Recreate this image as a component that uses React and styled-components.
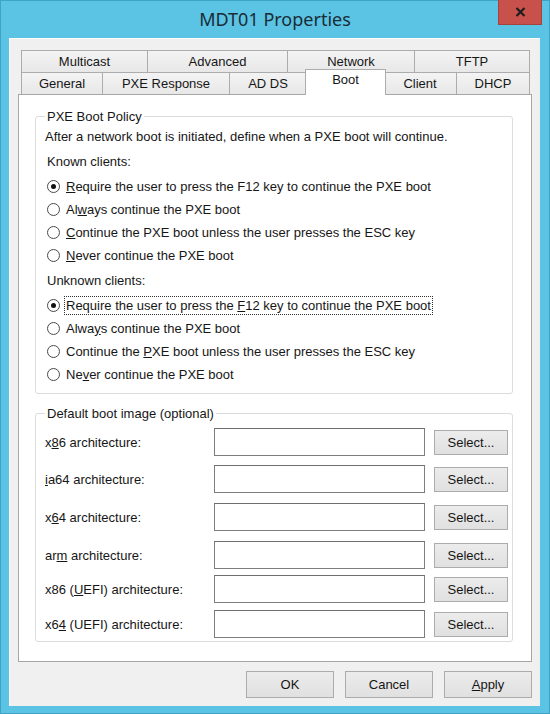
import React from 'react';
import styled, { createGlobalStyle } from 'styled-components';

const GlobalStyle = createGlobalStyle`
  html, body { margin: 0; padding: 0; background: #5bc4e4; }
  body { font-family: "Liberation Sans", Arial, sans-serif; }
  * { box-sizing: border-box; }
`;

const Window = styled.div`
  width: 550px;
  height: 714px;
  background: #5bc4e4;
  border: 1px solid #3fa3c6;
  display: flex;
  flex-direction: column;
`;

const TitleBar = styled.div`
  height: 37px;
  flex: none;
  display: grid;
  grid-template-columns: 1fr auto 1fr;
  align-items: start;
`;

const Title = styled.div`
  grid-column: 2;
  font-family: "Noto Sans", "Open Sans", sans-serif;
  font-size: 18px;
  line-height: 37px;
  color: #1a2c36;
`;

const CloseButton = styled.div`
  grid-column: 3;
  justify-self: end;
  width: 44px;
  height: 25px;
  margin-right: 7px;
  margin-top: -1px;
  background: #c9514c;
  border: 1px solid #a8423d;
  border-top: none;
  display: flex;
  align-items: center;
  justify-content: center;
`;

const Client = styled.div`
  flex: 1;
  margin: 0 9px 7px 8px;
  background: #f0f0f0;
  border-left: 1px solid #fbfbfb;
  border-top: 1px solid #fbfbfb;
  padding: 11px 8px 8px 8px;
  display: flex;
  flex-direction: column;
  color: #161616;
  font-size: 13px;
`;

const TabStrip = styled.div`
  flex: none;
  padding: 0 2px 0 3px;
  position: relative;
  z-index: 2;
`;

const TabRow = styled.div`
  display: flex;
  align-items: flex-start;
  height: 22px;
`;

const Tab = styled.div`
  flex: none;
  width: ${(p) => p.$w}px;
  height: 22px;
  border-top: 1px solid #acacac;
  border-right: 1px solid #acacac;
  background: linear-gradient(#f3f3f3, #e8e8e8);
  display: flex;
  align-items: center;
  justify-content: center;
  line-height: 16px;
  &:first-child {
    border-left: 1px solid #acacac;
  }
`;

const ActiveTab = styled(Tab)`
  width: ${(p) => p.$w + 4}px;
  height: 26px;
  margin: -3px -2px 0 -2px;
  border: 1px solid #acacac;
  border-bottom: none;
  background: #ffffff;
  padding-bottom: 5px;
  position: relative;
  z-index: 3;
`;

const Panel = styled.div`
  flex: 1;
  background: #ffffff;
  border: 1px solid #a6a6a6;
  padding: 13px 18px 0 16px;
  display: flex;
  flex-direction: column;
`;

const Group = styled.fieldset`
  margin: ${(p) => p.$top || 0}px 0 0 0;
  border: 1px solid #dcdcdc;
  border-radius: 3px;
  padding: ${(p) => p.$pad || '0 9px 7px 9px'};
  min-width: 0;
`;

const Legend = styled.legend`
  padding: 0 2px;
  margin-left: 0;
  line-height: 17px;
`;

const Line = styled.div`
  height: 23px;
  line-height: 23px;
  padding-left: ${(p) => p.$indent || 0}px;
  margin-top: ${(p) => p.$top || 0}px;
  white-space: nowrap;
`;

const RadioList = styled.div`
  margin-top: 2px;
  display: flex;
  flex-direction: column;
`;

const RadioRow = styled.div`
  display: flex;
  align-items: center;
  height: 23px;
  padding-left: 2px;
  gap: 4px;
  white-space: nowrap;
`;

const RadioCircle = styled.span`
  flex: none;
  width: 13px;
  height: 13px;
  border-radius: 50%;
  border: 1px solid #4a4a4a;
  background: #fff;
  display: flex;
  align-items: center;
  justify-content: center;
  &::after {
    content: '';
    width: 5px;
    height: 5px;
    border-radius: 50%;
    background: ${(p) => (p.$checked ? '#111' : 'transparent')};
  }
`;

const RadioText = styled.span`
  line-height: 17px;
  padding: 0 1px;
  border: 1px ${(p) => (p.$focused ? 'dotted #303030' : 'solid transparent')};
`;

const ImageRow = styled.div`
  display: grid;
  grid-template-columns: 160px 211px 74px;
  column-gap: 9px;
  align-items: center;
  margin-top: ${(p) => p.$top}px;
`;

const RowLabel = styled.div`
  white-space: nowrap;
`;

const TextBox = styled.div`
  height: 28px;
  background: #fff;
  border: 1px solid #7d7d7d;
  border-top-color: #6f6f6f;
`;

const PushButton = styled.div`
  width: ${(p) => p.$w || 74}px;
  height: ${(p) => p.$h || 25}px;
  background: linear-gradient(#ececec, #e0e0e0);
  border: 1px solid #acacac;
  display: flex;
  align-items: center;
  justify-content: center;
  white-space: nowrap;
`;

const ButtonBar = styled.div`
  flex: none;
  margin-top: 9px;
  display: flex;
  justify-content: flex-end;
  gap: 11px;
`;

const backTabs = [
  { label: 'Multicast', w: 127 },
  { label: 'Advanced', w: 140 },
  { label: 'Network', w: 127 },
  { label: 'TFTP', w: 115 },
];

const frontTabs = [
  { label: 'General', w: 82 },
  { label: 'PXE Response', w: 127 },
  { label: 'AD DS', w: 77 },
  { label: 'Boot', w: 77, active: true },
  { label: 'Client', w: 73 },
  { label: 'DHCP', w: 73 },
];

const knownOptions = [
  [<u key="u">R</u>, 'equire the user to press the F12 key to continue the PXE boot'],
  ['Al', <u key="u">w</u>, 'ays continue the PXE boot'],
  [<u key="u">C</u>, 'ontinue the PXE boot unless the user presses the ESC key'],
  [<u key="u">N</u>, 'ever continue the PXE boot'],
];

const unknownOptions = [
  ['Require the user to press the ', <u key="u">F</u>, '12 key to continue the PXE boot'],
  ['Alwa', <u key="u">y</u>, 's continue the PXE boot'],
  ['Continue the ', <u key="u">P</u>, 'XE boot unless the user presses the ESC key'],
  ['Ne', <u key="u">v</u>, 'er continue the PXE boot'],
];

const architectures = [
  { label: ['x', <u key="u">8</u>, '6 architecture:'], top: 6 },
  { label: [<u key="u">i</u>, 'a64 architecture:'], top: 9 },
  { label: ['x', <u key="u">6</u>, '4 architecture:'], top: 10 },
  { label: ['ar', <u key="u">m</u>, ' architecture:'], top: 10 },
  { label: ['x86 (', <u key="u">U</u>, 'EFI) architecture:'], top: 6 },
  { label: ['x6', <u key="u">4</u>, ' (UEFI) architecture:'], top: 7 },
];

function RadioGroup({ options, focusFirst }) {
  return (
    <RadioList>
      {options.map((text, i) => (
        <RadioRow key={i}>
          <RadioCircle $checked={i === 0} />
          <RadioText $focused={focusFirst && i === 0}>{text}</RadioText>
        </RadioRow>
      ))}
    </RadioList>
  );
}

export default function App() {
  return (
    <>
      <GlobalStyle />
      <Window>
        <TitleBar>
          <Title>MDT01 Properties</Title>
          <CloseButton>
            <svg width="11" height="10" viewBox="0 0 11 10">
              <path d="M1.5 1 L9.5 9 M9.5 1 L1.5 9" stroke="#1d1d1d" strokeWidth="2.2" fill="none" />
            </svg>
          </CloseButton>
        </TitleBar>
        <Client>
          <TabStrip>
            <TabRow>
              {backTabs.map((t) => (
                <Tab key={t.label} $w={t.w}>{t.label}</Tab>
              ))}
            </TabRow>
            <TabRow>
              {frontTabs.map((t) =>
                t.active ? (
                  <ActiveTab key={t.label} $w={t.w}>{t.label}</ActiveTab>
                ) : (
                  <Tab key={t.label} $w={t.w}>{t.label}</Tab>
                )
              )}
            </TabRow>
          </TabStrip>
          <Panel>
            <Group>
              <Legend>PXE Boot Policy</Legend>
              <Line>After a network boot is initiated, define when a PXE boot will continue.</Line>
              <Line $indent={2} $top={2}>Known clients:</Line>
              <RadioGroup options={knownOptions} />
              <Line $indent={2} $top={2}>Unknown clients:</Line>
              <RadioGroup options={unknownOptions} focusFirst />
            </Group>
            <Group $top={11} $pad="0 9px 3px 9px">
              <Legend>Default boot image (optional)</Legend>
              {architectures.map((a, i) => (
                <ImageRow key={i} $top={a.top}>
                  <RowLabel>{a.label}</RowLabel>
                  <TextBox />
                  <PushButton>Select...</PushButton>
                </ImageRow>
              ))}
            </Group>
          </Panel>
          <ButtonBar>
            <PushButton $w={88} $h={27}>OK</PushButton>
            <PushButton $w={88} $h={27}>Cancel</PushButton>
            <PushButton $w={88} $h={27}><u>A</u>pply</PushButton>
          </ButtonBar>
        </Client>
      </Window>
    </>
  );
}
